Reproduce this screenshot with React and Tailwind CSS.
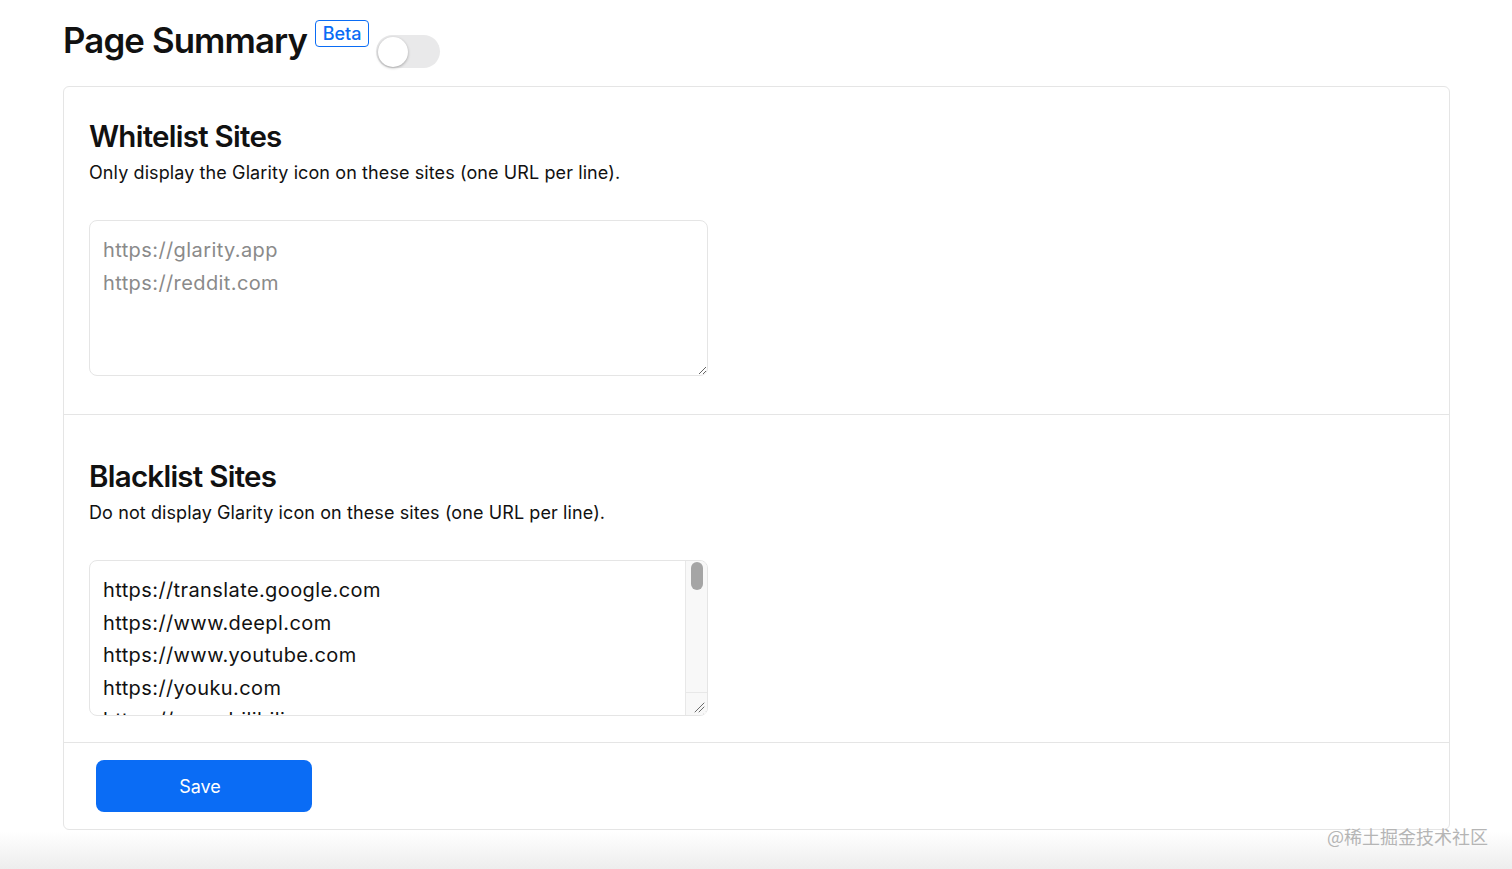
import React, { useState } from 'react';

const blacklist = [
  'https://translate.google.com',
  'https://www.deepl.com',
  'https://www.youtube.com',
  'https://youku.com',
  'https://www.bilibili.com',
  'https://mail.google.com',
  'https://www.netflix.com',
  'https://www.iqiyi.com',
  'https://v.qq.com',
  'https://www.douyin.com',
  'https://www.tiktok.com',
  'https://twitter.com',
  'https://www.facebook.com',
  'https://www.instagram.com',
  'https://web.whatsapp.com',
  'https://web.telegram.org',
  'https://discord.com',
  'https://slack.com',
  'https://www.notion.so',
  'https://docs.google.com',
].join('\n');

const Toggle = () => {
  const [on, setOn] = useState(false);
  return (
    <button
      onClick={() => setOn(!on)}
      className={`relative w-[64px] h-[33px] rounded-full transition-colors ${on ? 'bg-[#0a6cf5]' : 'bg-[#e9e9ea]'}`}
    >
      <span
        className={`absolute top-[1.5px] left-[1.5px] w-[30px] h-[30px] rounded-full bg-white shadow-[0_1px_3px_rgba(0,0,0,0.3)] transition-transform ${on ? 'translate-x-[31px]' : ''}`}
      />
    </button>
  );
};

const Grip = () => (
  <svg width="12" height="12" viewBox="0 0 12 12" className="absolute right-[2px] bottom-[2px]">
    <path d="M2 11 L11 2 M6 11 L11 6" stroke="#6b6b6b" strokeWidth="1" strokeLinecap="round" />
  </svg>
);

const areaCls =
  'block w-[619px] h-[156px] px-[13px] py-[13px] text-[20px] leading-[32.5px] tracking-[0.4px] border border-[#e5e5e5] rounded-[8px] outline-none text-[#111]';

const App = () => {
  return (
    <div className="relative min-h-screen bg-white text-[#111] font-['Inter','Liberation_Sans',sans-serif]">
      <div className="pl-[63px] pr-[62px] pt-[18px]">
        {/* Header */}
        <div className="flex items-start h-[68px]">
          <h1 className="text-[34.8px] leading-[48px] font-semibold tracking-tight -mt-[2px]">Page Summary</h1>
          <span className="ml-[8px] mt-[2px] px-[6.5px] h-[27px] flex items-center text-[18px] font-medium text-[#0a6cf5] border-[1.5px] border-[#0a6cf5] rounded-[4px]">
            Beta
          </span>
          <div className="ml-[7px] mt-[17px]">
            <Toggle />
          </div>
        </div>

        {/* Card */}
        <div className="border border-[#e5e5e5] rounded-[6px] bg-white">
          <section className="px-[25px] pt-[31px] pb-[38px] border-b border-[#e5e5e5]">
            <h2 className="text-[29.5px] leading-[36px] font-semibold tracking-tight">Whitelist Sites</h2>
            <p className="mt-[5px] text-[18px] leading-[28px] tracking-[0.1px] text-[#111]">
              Only display the Glarity icon on these sites (one URL per line).
            </p>
            <textarea
              className={`mt-[33px] ${areaCls} placeholder:text-[#8a8a8a]`}
              placeholder={'https://glarity.app\nhttps://reddit.com'}
            />
          </section>

          <section className="px-[25px] pt-[43px] pb-[26px] border-b border-[#e5e5e5]">
            <h2 className="text-[29.5px] leading-[36px] font-semibold tracking-tight">Blacklist Sites</h2>
            <p className="mt-[5px] text-[18px] leading-[28px] tracking-[0.1px] text-[#111]">
              Do not display Glarity icon on these sites (one URL per line).
            </p>
            <div className="relative mt-[33px] w-[619px]">
              <textarea className={`${areaCls} pr-[30px]`} defaultValue={blacklist} />
              {/* scrollbar overlay */}
              <div className="pointer-events-none absolute top-[1px] right-[1px] bottom-[24px] w-[22px] bg-[#f8f8f8] border-l border-[#e8e8e8] rounded-tr-[7px]">
                <div className="mx-auto mt-[1px] w-[12px] h-[28px] rounded-full bg-[#a5a5a5]" />
              </div>
              <div className="pointer-events-none absolute right-[1px] bottom-[1px] w-[22px] h-[23px] bg-[#f8f8f8] border-l border-t border-[#e8e8e8] rounded-br-[7px]">
                <Grip />
              </div>
            </div>
          </section>

          <div className="px-[32px] py-[17px]">
            <button className="w-[216px] h-[52px] rounded-[8px] bg-[#0a6cf5] text-white text-[18px] pr-[8px]">
              Save
            </button>
          </div>
        </div>
      </div>

      <div className="mt-[2px] h-[39px] bg-gradient-to-b from-white to-[#ececec]" />

      <span className="absolute right-[24px] top-[823px] text-[18px] text-[#b5b5b5] font-['Noto_Sans_CJK_SC',sans-serif]">
        @稀土掘金技术社区
      </span>
    </div>
  );
};

export default App;
